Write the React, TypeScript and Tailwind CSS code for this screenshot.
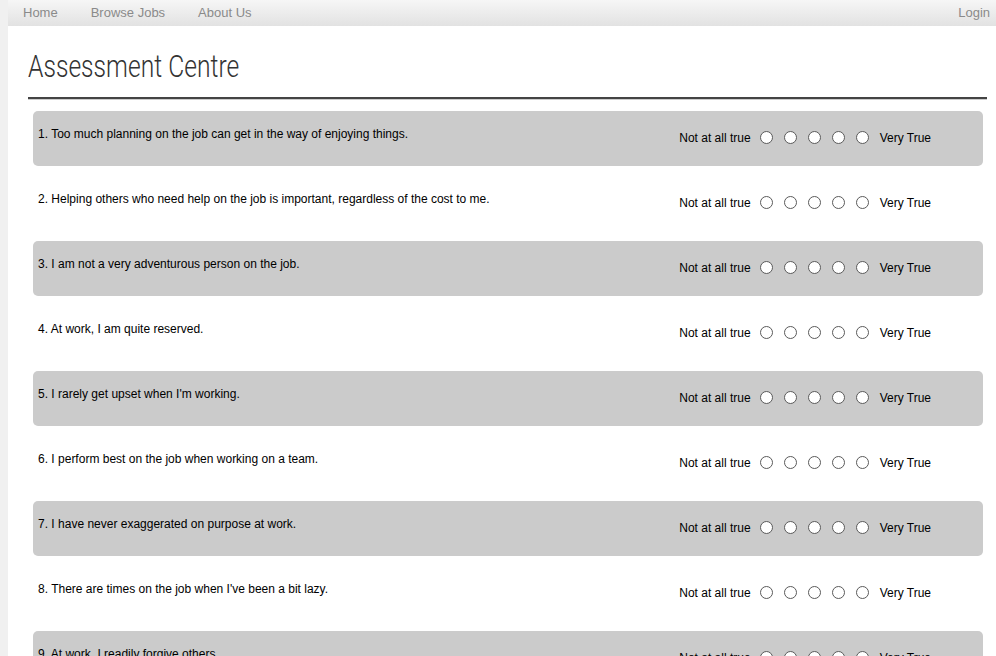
import { useState } from "react";

const questions = [
  "Too much planning on the job can get in the way of enjoying things.",
  "Helping others who need help on the job is important, regardless of the cost to me.",
  "I am not a very adventurous person on the job.",
  "At work, I am quite reserved.",
  "I rarely get upset when I'm working.",
  "I perform best on the job when working on a team.",
  "I have never exaggerated on purpose at work.",
  "There are times on the job when I've been a bit lazy.",
  "At work, I readily forgive others.",
];

const App = () => {
  const [answers, setAnswers] = useState<Record<number, number>>({});

  return (
    <div className="flex min-h-screen bg-[#f0f0f0] font-['Liberation_Sans',Arial,sans-serif]">
      <div className="ml-2 flex-1 bg-white">
        {/* Top Navigation */}
        <header className="flex h-[26px] items-center justify-between bg-gradient-to-b from-[#f6f6f6] to-[#e2e2e2] pl-[15px] pr-[6px] text-[13px] text-[#8a8a8a]">
          <nav className="flex items-center gap-[33px]">
            <a href="#">Home</a>
            <a href="#">Browse Jobs</a>
            <a href="#">About Us</a>
          </nav>
          <a href="#">Login</a>
        </header>

        <div className="pl-5 pr-[9px]">
          <h1 className="pt-[22px] pb-[13px] font-['Roboto',sans-serif] text-[32px] font-light leading-[36px] text-[#333]">
            <span className="inline-block origin-left scale-x-[0.77]">Assessment Centre</span>
          </h1>
          <div className="h-[2px] bg-[#444] shadow-[0_1px_0_#ccc]" />

          <div className="mt-3 pl-[5px] pr-[4px]">
            {questions.map((q, i) => (
              <div
                key={i}
                className={`mb-[10px] flex h-[55px] justify-between rounded-[5px] pl-[5px] pr-[52px] text-[12px] text-black ${
                  i % 2 === 0 ? "bg-[#cbcbcb]" : "bg-white"
                }`}
              >
                <p className="pt-[15px] leading-[16px]">
                  {i + 1}. {q}
                </p>
                <div className="flex items-start pt-[19px]">
                  <span className="leading-[16px]">Not at all true</span>
                  <div className="ml-[9px] flex gap-[11px] pt-[1px]">
                    {[1, 2, 3, 4, 5].map((v) => (
                      <button
                        key={v}
                        onClick={() => setAnswers({ ...answers, [i]: v })}
                        className="flex h-[13px] w-[13px] items-center justify-center rounded-full border border-[#5a5a5a] bg-white"
                      >
                        {answers[i] === v && <span className="h-[5px] w-[5px] rounded-full bg-[#333]" />}
                      </button>
                    ))}
                  </div>
                  <span className="ml-[11px] leading-[16px]">Very True</span>
                </div>
              </div>
            ))}
          </div>
        </div>
      </div>
    </div>
  );
};

export default App;
